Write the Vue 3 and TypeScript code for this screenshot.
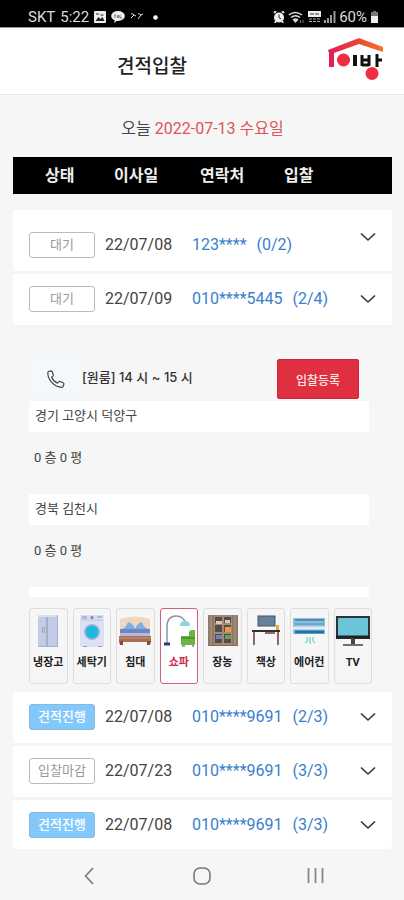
<script setup lang="ts">
import { ref } from 'vue'

interface Bid {
  status: string
  active: boolean
  date: string
  phone: string
  count: string
  open: boolean
}

const bids = ref<Bid[]>([
  { status: '대기', active: false, date: '22/07/08', phone: '123****', count: '(0/2)', open: false },
  { status: '대기', active: false, date: '22/07/09', phone: '010****5445', count: '(2/4)', open: true },
  { status: '견적진행', active: true, date: '22/07/08', phone: '010****9691', count: '(2/3)', open: false },
  { status: '입찰마감', active: false, date: '22/07/23', phone: '010****9691', count: '(3/3)', open: false },
  { status: '견적진행', active: true, date: '22/07/08', phone: '010****9691', count: '(3/3)', open: false },
])

const places = [
  { address: '경기 고양시 덕양구', size: '0 층 0 평' },
  { address: '경북 김천시', size: '0 층 0 평' },
]

const items = ['냉장고', '세탁기', '침대', '쇼파', '장농', '책상', '에어컨', 'TV']
const selected = ref('쇼파')
</script>

<template>
  <div class="page">
    <div class="status">
      <div class="status-group">
        <span>SKT</span>
        <span>5:22</span>
        <svg width="12" height="12" viewBox="0 0 12 12"><rect width="12" height="12" rx="1" fill="#eee" /><path d="M1.500 10l3-4 2 2 2-2 2 4z" fill="#222" /><path d="M2 3h3M6.500 4h3" stroke="#222" /></svg>
        <svg width="14" height="12" viewBox="0 0 14 12"><ellipse cx="7" cy="5" rx="6.800" ry="5" fill="#eee" /><path d="M4 8l-1 4 4-3z" fill="#eee" /><path d="M3 4h2M4 4v3M6 7l1-3 1 3M9 4v3h2" stroke="#777" fill="none" /></svg>
        <svg width="14" height="10" viewBox="0 0 14 10"><path d="M1 2q2-1 3 1L1 6m3-3 2 1M8 2q2-1 3 1L8 7m3-4 2-1" stroke="#ddd" fill="none" /></svg>
        <svg class="dot" width="5" height="5" viewBox="0 0 5 5"><circle cx="2.500" cy="2.500" r="2.300" fill="#fff" /></svg>
      </div>
      <div class="status-group right">
        <svg width="12" height="12" viewBox="0 0 12 12"><path d="M1 2l2-2M11 2L9 0M2 12l1-2M10 12l-1-2" stroke="#ddd" stroke-width="2" /><circle cx="6" cy="6.500" r="5" fill="#eee" /><path d="M6 3.500v3.200L8 8" stroke="#222" fill="none" /></svg>
        <svg width="17" height="13" viewBox="0 0 17 13"><path d="M1 4q6-5 13 0M3 6.500q4.500-3.500 9 0M5 9q2.500-2 5 0" stroke="#ddd" stroke-width="1.500" fill="none" /><path d="M7.500 12L5 9h5z" fill="#ddd" /><path d="M12.500 9v3M15 9v3" stroke="#777" /></svg>
        <svg width="13" height="12" viewBox="0 0 13 12"><rect width="13" height="6" fill="#eee" /><path d="M2 3h4M7 3h4" stroke="#777" stroke-width="1.500" /><path d="M1 8h11M1 10.500h11" stroke="#aaa" stroke-dasharray="3 1" /></svg>
        <svg width="12" height="12" viewBox="0 0 12 12"><path d="M1 12V9M4 12V7M7 12V4" stroke="#999" stroke-width="2" /><path d="M10.500 12V0" stroke="#999" stroke-width="2" /></svg>
        <span>60%</span>
        <svg width="9" height="12" viewBox="0 0 9 12"><path d="M3 0h3v1h2v11H1V1h2z" fill="#777" /><path d="M1 5h7v7H1z" fill="#eee" /></svg>
      </div>
    </div>

    <header class="top">
      <h1>견적입찰</h1>
      <svg class="logo" width="56" height="42" viewBox="0 0 56 42" role="img" aria-label="이방">
        <defs>
          <linearGradient id="roof" x1="0" x2="1"><stop offset="0" stop-color="#e41b5b" /><stop offset=".5" stop-color="#e8423a" /><stop offset="1" stop-color="#f2732a" /></linearGradient>
        </defs>
        <path d="M0 12L31 0 55 9V14L31 6 6 15V29H1V15z" fill="url(#roof)" />
        <circle cx="15.500" cy="22" r="6.500" fill="#ee2d43" />
        <rect x="25" y="17" width="4" height="11" fill="#111" />
        <path d="M34 17v11M41 17v11M34 22h7M34 27h7M49 16v13M49 22h5" stroke="#111" stroke-width="3" fill="none" />
        <circle cx="44" cy="35.500" r="6.500" fill="#ee2d43" />
      </svg>
    </header>

    <main class="content">
      <p class="today">오늘 <span>2022-07-13 수요일</span></p>

      <table class="bids">
        <thead>
          <tr class="head">
            <th scope="col" class="th-status">상태</th>
            <th scope="col">이사일</th>
            <th scope="col">연락처</th>
            <th scope="col">입찰</th>
          </tr>
        </thead>
        <tbody>
          <template v-for="(bid, i) in bids" :key="i">
            <tr class="row">
              <td><span class="badge" :class="{ active: bid.active }">{{ bid.status }}</span></td>
              <td class="date">{{ bid.date }}</td>
              <td class="contact"><a href="#">{{ bid.phone }}</a><span>{{ bid.count }}</span></td>
              <td class="more">
                <button type="button" class="toggle" aria-label="상세" :aria-expanded="bid.open" @click="bid.open = !bid.open">
                  <svg width="16" height="10" viewBox="0 0 16 10"><path d="M1 1.500L8 8l7-6.500" fill="none" stroke="#333" stroke-width="1.600" /></svg>
                </button>
              </td>
            </tr>
            <tr v-if="bid.open" class="detail">
              <td>
                <div class="visit">
                  <a href="#" class="call" aria-label="전화">
                    <svg width="18" height="18" viewBox="0 0 18 18"><path d="M1.500 1.500L4 .8c.6 0 1 .3 1.300.9l1 3c.2.6 0 1-.4 1.400L4.700 7.200c1 2.500 3 4.700 5.700 5.900l1.300-1.300c.4-.4.900-.5 1.400-.3l3 1.300c.7.300 1 .8.8 1.500l-.7 2c-.2.700-.7 1-1.500 1C7 17 1 10 .8 3c0-.8.200-1.300.7-1.500z" fill="none" stroke="#444" stroke-width="1.200" /></svg>
                  </a>
                  <strong>[원룸] 14 시 ~ 15 시</strong>
                  <button type="button" class="register">입찰등록</button>
                </div>
                <template v-for="place in places" :key="place.address">
                  <p class="address">{{ place.address }}</p>
                  <p class="size">{{ place.size }}</p>
                </template>
                <div class="strip"></div>
                <div class="items">
                  <button v-for="item in items" :key="item" type="button" class="item" :class="{ chosen: item === selected }" :aria-pressed="item === selected" @click="selected = item">
                    <svg width="34" height="34" viewBox="0 0 34 34">
                      <g v-if="item === '냉장고'">
                        <rect x="7" y="1" width="20" height="32" fill="#c3cbe6" /><path d="M16 1v32" stroke="#8791b5" /><path d="M7 1h20v2H7z" fill="#dce1f2" /><path d="M11.500 13v6M13.500 13v6" stroke="#a8a986" /><path d="M26.500 1v32M7 32.500h20" stroke="#a6b0d2" />
                      </g>
                      <g v-else-if="item === '세탁기'">
                        <rect x="5" y="1" width="24" height="32" fill="#dbe1f3" /><path d="M6 6h22" stroke="#b9c1dc" /><rect x="7" y="2" width="5" height="3" fill="#b0badb" /><circle cx="17" cy="3.500" r="1.500" fill="#7280ad" /><path d="M22 3h5" stroke="#8794bd" /><circle cx="17" cy="18" r="8" fill="#a9b5dc" /><circle cx="17" cy="18" r="6.500" fill="#1cb9e2" /><path d="M8 32.500h4M23 32.500h4" stroke="#909bbd" />
                      </g>
                      <g v-else-if="item === '침대'">
                        <path d="M2 5q15-5 30 0v12H2z" fill="#f1d6be" /><path d="M4 15q4-1 6-7 5 1 7 7 2-6 7-7 2 6 6 7v3H4z" fill="#79b2e2" /><path d="M2 15h30v8H2z" fill="#6e86c4" /><path d="M2 19h30v3H2z" fill="#b8b9d6" /><path d="M1 22h32v6H1z" fill="#a96f58" /><path d="M1 24h32" stroke="#c69278" /><path d="M1 27h4v4H2zM29 27h4l-1 4h-3z" fill="#8c4c3d" />
                      </g>
                      <g v-else-if="item === '쇼파'">
                        <path d="M5 30V13Q5 2 14 2q8 0 9 7" fill="none" stroke="#8d94ad" stroke-width="1.500" /><path d="M18 12q0-5 5-5t5 5z" fill="#86d6dc" /><path d="M2 30h6" stroke="#303a7b" stroke-width="3" /><path d="M27 19q0-3 3-3h3v15H19v-9h8z" fill="#6bb643" /><path d="M19 24h14" stroke="#4d982e" stroke-width="2" /><path d="M20 32h3M30 32h2" stroke="#446" />
                      </g>
                      <g v-else-if="item === '장농'">
                        <rect x="3" y="1" width="30" height="31" fill="#a18a76" /><path d="M4 1v31M8 1v31M28 1v31M32 1v31" stroke="#7f6958" /><rect x="10" y="3" width="16" height="26" fill="#554b49" /><path d="M18 2v29M10 10h16M10 19h16" stroke="#a18a76" stroke-width="2" /><path d="M11 7h6v3h-6zM20 6h5v3h-5z" fill="#d3cabe" /><rect x="20" y="13" width="6" height="5" fill="#ee9848" /><rect x="11" y="21" width="6" height="4" fill="#6684b5" /><rect x="20" y="21" width="6" height="4" fill="#66a253" /><path d="M3 31.500h30" stroke="#816a58" />
                      </g>
                      <g v-else-if="item === '책상'">
                        <rect x="9" y="2" width="17" height="10" fill="#66819a" stroke="#445667" /><path d="M3 17h28" stroke="#313038" stroke-width="2" /><path d="M5 18v13M29 18v13" stroke="#8e6768" stroke-width="2" /><path d="M16 19h10" stroke="#936b5f" stroke-width="2" /><path d="M27 11h3v5h-3z" fill="#edaa35" />
                      </g>
                      <g v-else-if="item === '에어컨'">
                        <path d="M1 4h32v16H1z" fill="#8cbedb" /><path d="M3 6h29" stroke="#528eb8" stroke-width="2" /><path d="M3 10h29" stroke="#6fa5c7" stroke-width="2" /><path d="M1 14h32" stroke="#e0edf7" stroke-width="3" /><path d="M3 18h29" stroke="#286fa8" stroke-width="3" /><path d="M14 23q4 3-1 6M18 23v7M22 23q-3 3 1 6" stroke="#83d8cf" fill="none" stroke-width="1.500" />
                      </g>
                      <g v-else>
                        <rect x="1" y="3" width="32" height="21" fill="#6bc4d8" stroke="#303136" stroke-width="2" /><path d="M0 23h34" stroke="#222" stroke-width="3" /><path d="M17 24v6" stroke="#444" stroke-width="4" /><path d="M7 31h20" stroke="#444" stroke-width="1.500" />
                      </g>
                    </svg>
                    <span>{{ item }}</span>
                  </button>
                </div>
              </td>
            </tr>
          </template>
        </tbody>
      </table>
    </main>

    <nav class="nav">
      <button type="button" aria-label="뒤로"><svg width="10" height="18" viewBox="0 0 10 18"><path d="M9 1L1.500 9 9 17" fill="none" stroke="#777" stroke-width="1.600" /></svg></button>
      <button type="button" aria-label="홈"><svg width="18" height="18" viewBox="0 0 18 18"><rect x="1" y="1" width="16" height="16" rx="6" fill="none" stroke="#777" stroke-width="1.600" /></svg></button>
      <button type="button" aria-label="최근 앱"><svg width="17" height="17" viewBox="0 0 17 17"><path d="M1.500 1v15M8.500 1v15M15.500 1v15" stroke="#888" stroke-width="1.800" /></svg></button>
    </nav>
  </div>
</template>

<style>
body {
  margin: 0;
  background: #f6f6f6;
}
</style>

<style scoped>
.page {
  display: flex;
  flex-direction: column;
  min-height: 100vh;
  background: #f6f6f6;
  color: #444;
  font-family: Roboto, "Noto Sans CJK KR", sans-serif;
}
h1,
p {
  margin: 0;
}
button {
  padding: 0;
  border: 0;
  background: none;
  font-family: inherit;
  cursor: pointer;
}
a {
  color: inherit;
  text-decoration: none;
}
svg {
  display: block;
  flex: none;
}
.status {
  display: flex;
  justify-content: space-between;
  height: 27px;
  padding: 0 25px 0 28px;
  border-bottom: 1px solid #999;
  background: #000;
  color: #ddd;
  font-size: 15px;
  line-height: 20px;
}
.status-group {
  display: flex;
  align-items: center;
  gap: 5px;
  padding-top: 7px;
}
.status-group.right {
  gap: 3px;
}
.dot {
  margin-left: 4px;
}
.top {
  display: flex;
  align-items: center;
  justify-content: space-between;
  height: 66px;
  padding: 0 20px 0 117px;
  border-bottom: 1px solid #e8e8e8;
  background: #fff;
}
h1 {
  padding-top: 12px;
  color: #222;
  font-size: 19px;
  font-weight: 500;
  line-height: 28px;
}
.logo {
  margin-bottom: 5px;
}
.content {
  flex: 1;
  padding: 0 12px 0 13px;
}
.today {
  padding: 23px 0 17px;
  font-size: 16px;
  line-height: 22px;
  text-align: center;
}
.today span {
  color: #dd5555;
}
.bids,
.bids thead,
.bids tbody {
  display: block;
}
.bids td,
.bids th {
  padding: 0;
}
.head,
.row {
  display: grid;
  align-items: center;
}
.head {
  grid-template-columns: 101px 86px 84px 1fr;
  margin-bottom: 16px;
  background: #000;
  color: #eee;
  font-size: 16px;
  font-weight: 700;
  line-height: 37px;
  text-align: left;
}
.head .th-status {
  padding-left: 32px;
}
.row {
  grid-template-columns: 76px 87px 1fr 32px;
  padding: 12px 0 13px 16px;
  border-bottom: 3px solid #f4f4f4;
  background: #fff;
}
.row:first-child {
  padding-top: 22px;
}
.row:last-child {
  padding-bottom: 11px;
  border-bottom: 0;
  border-radius: 0 0 4px 4px;
}
.badge {
  display: block;
  box-sizing: border-box;
  width: 66px;
  height: 26px;
  border: 1px solid #bbb;
  border-radius: 3px;
  color: #999;
  font-size: 13px;
  line-height: 24px;
  text-align: center;
}
.badge.active {
  border-color: #86bbdd;
  background: #82c8fa;
  color: #fff;
  font-weight: 500;
}
.date {
  font-size: 16px;
  line-height: 26px;
}
.contact {
  display: flex;
  gap: 10px;
  color: #3880cd;
  font-size: 16px;
  line-height: 26px;
}
.row:first-child .more {
  align-self: start;
}
.toggle {
  display: block;
  padding: 8px 0;
}
.row:first-child .toggle {
  padding: 0;
}
.detail,
.detail td {
  display: block;
}
.detail {
  padding: 31px 20px 8px 16px;
}
.visit {
  display: flex;
  align-items: flex-start;
  height: 42px;
  margin-right: 13px;
}
.call {
  display: flex;
  align-items: center;
  justify-content: flex-end;
  box-sizing: border-box;
  width: 53px;
  height: 40px;
  padding-right: 17px;
  background: #f5f8fb;
}
.visit strong {
  flex: 1;
  color: #333;
  font-family: Inter, "Noto Sans CJK KR", sans-serif;
  font-size: 13px;
  font-weight: 500;
  line-height: 36px;
}
.register {
  width: 82px;
  height: 40px;
  border: 1px solid #d32043;
  border-radius: 2px;
  background: #df3041;
  color: #fde8e8;
  font-size: 12px;
  font-weight: 500;
}
.address {
  margin-right: 3px;
  padding: 5px 6px 6px;
  background: #fff;
  font-size: 13px;
  line-height: 20px;
}
.size {
  padding: 16px 5px 26px;
  font-size: 13px;
  line-height: 20px;
}
.strip {
  height: 10px;
  margin-right: 3px;
  background: #fff;
}
.items {
  display: grid;
  grid-template-columns: repeat(8, 1fr);
  gap: 5px;
  margin-top: 11px;
}
.item {
  display: flex;
  flex-direction: column;
  align-items: center;
  gap: 6px;
  min-width: 0;
  height: 76px;
  padding-top: 5px;
  border: 1px solid #ddd;
  border-radius: 3px;
  color: #222;
  font-size: 11px;
  font-weight: 700;
  line-height: 18px;
  white-space: nowrap;
}
.item.chosen {
  border-color: #d0637b;
  background: #fff;
  color: #ce2e50;
}
.nav {
  display: grid;
  grid-template-columns: repeat(3, 1fr);
  height: 49px;
  padding: 0 32px;
}
.nav button {
  display: flex;
  align-items: center;
  justify-content: center;
}
</style>
